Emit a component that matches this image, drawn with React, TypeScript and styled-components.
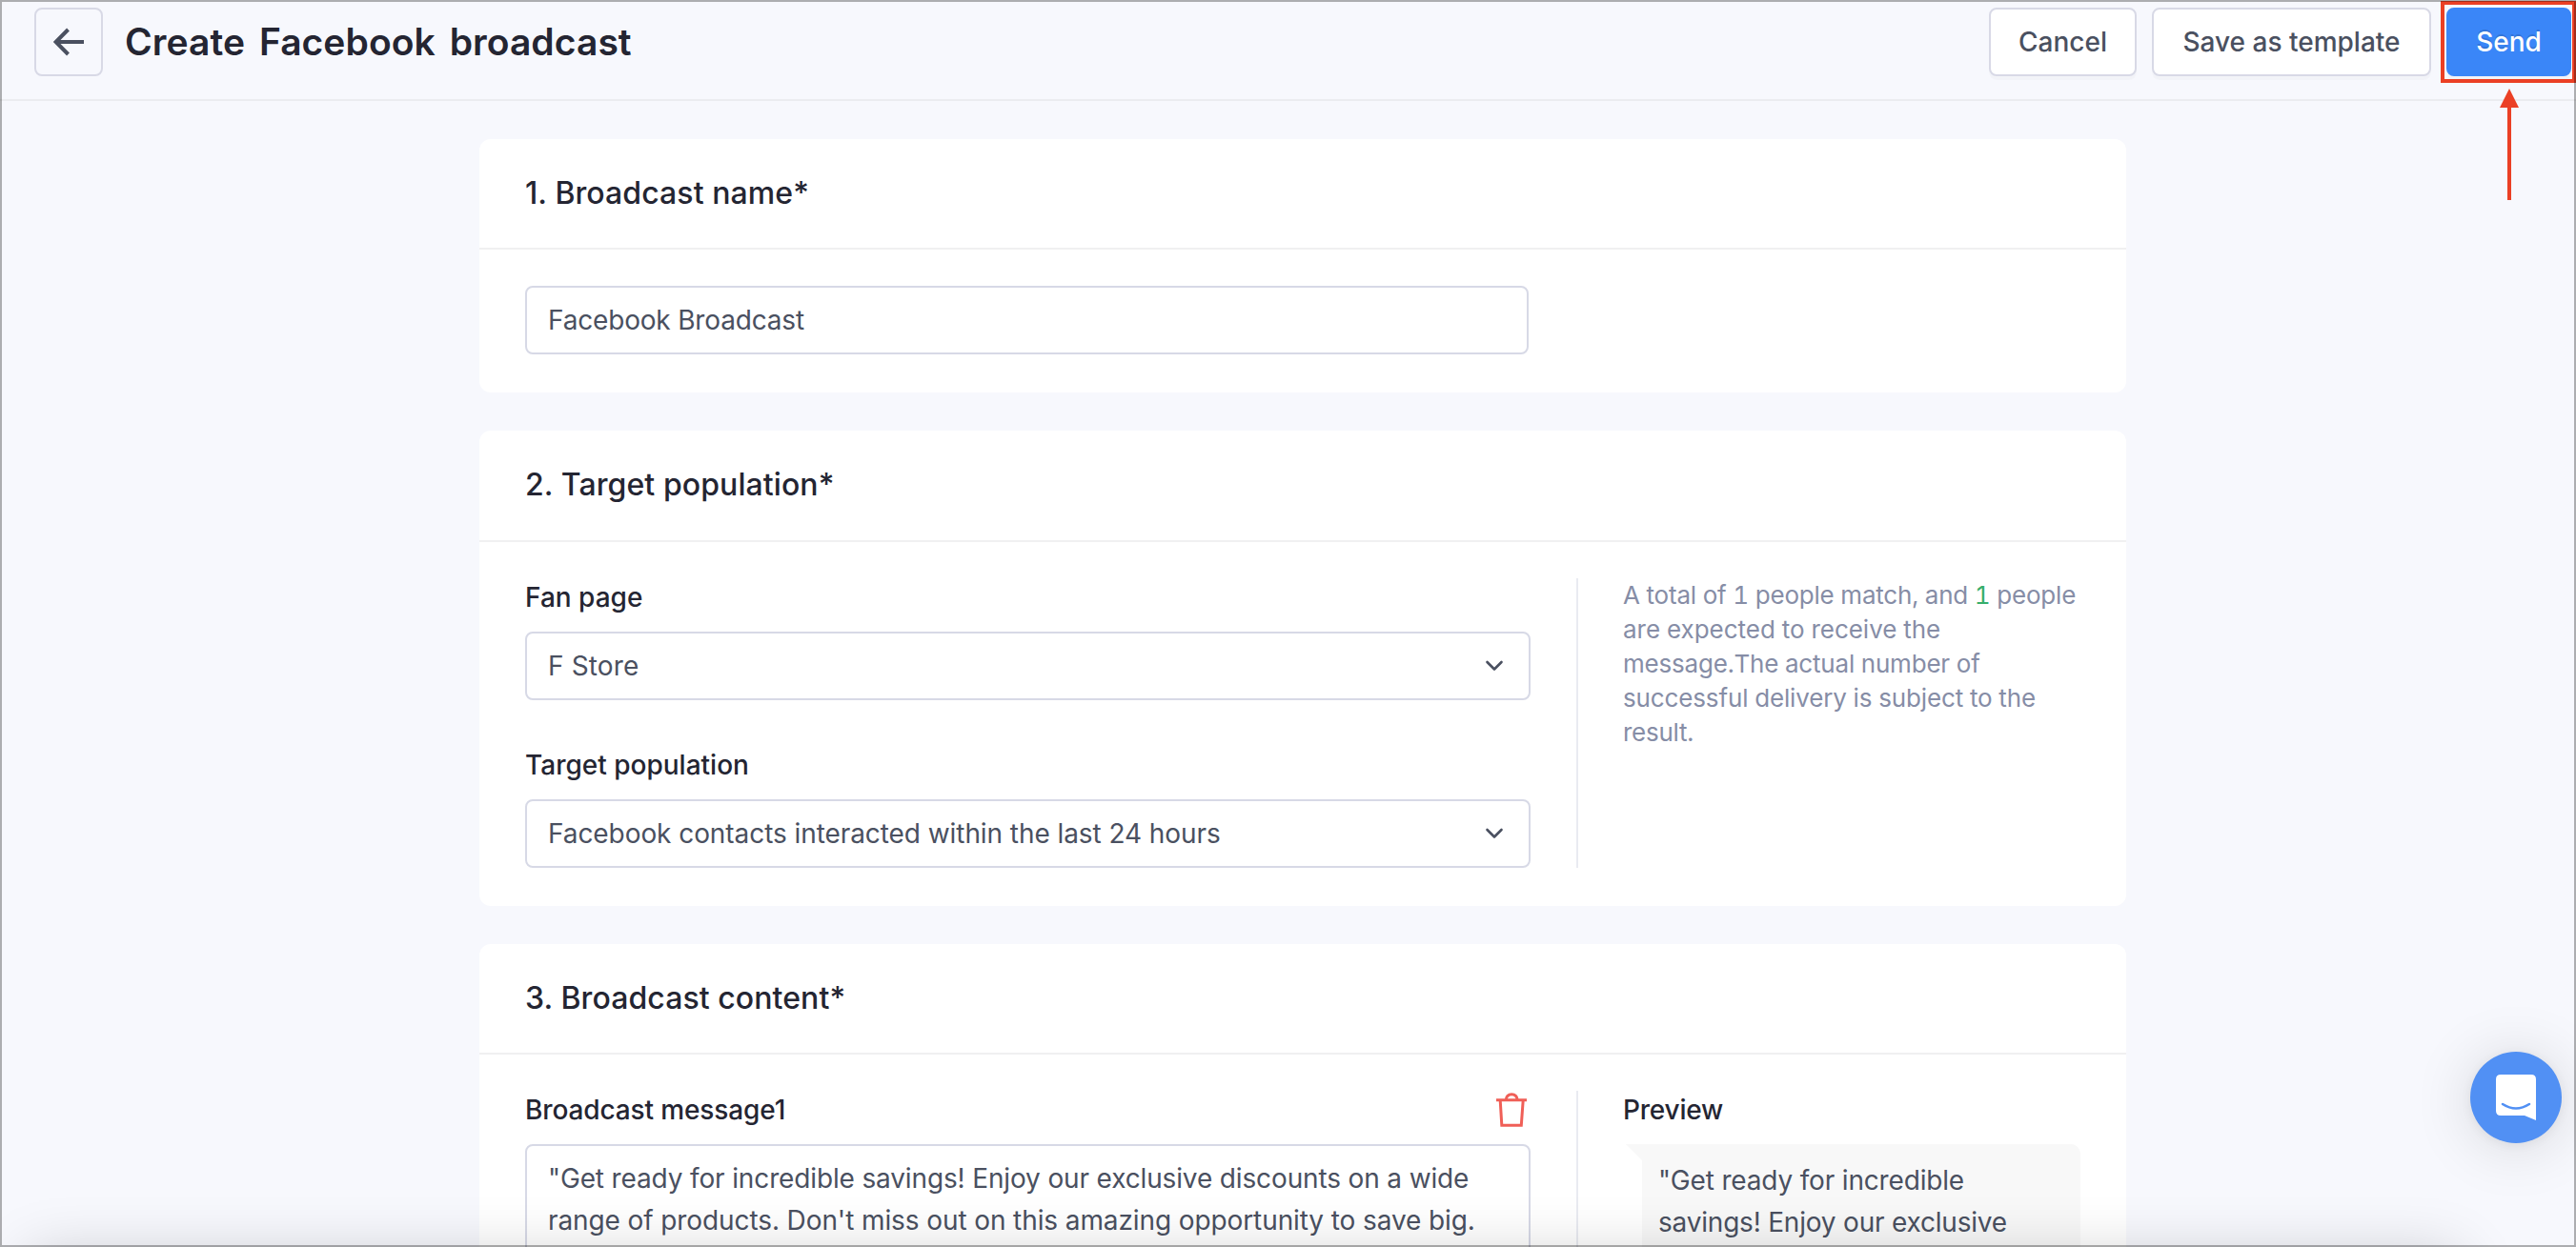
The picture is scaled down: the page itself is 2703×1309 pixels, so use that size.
import React from "react";
import styled, { createGlobalStyle } from "styled-components";

const GlobalStyle = createGlobalStyle`
  * {
    box-sizing: border-box;
  }

  body {
    margin: 0;
    background: #f7f8fd;
    font-family: Inter, "Noto Sans", sans-serif;
    color: #4a5060;
    overflow: hidden;
  }

  h1, h2, p {
    margin: 0;
  }
`;

const Page = styled.div`
  position: relative;
  width: 2703px;
  height: 1309px;
  overflow: hidden;
`;

const Header = styled.header`
  display: flex;
  align-items: flex-start;
  height: 106px;
  padding: 8px 5px 0 36px;
  border-bottom: 2px solid #ebecf0;
`;

const BackButton = styled.button`
  display: flex;
  align-items: center;
  justify-content: center;
  width: 72px;
  height: 72px;
  padding: 0;
  border: 2px solid #d8d9e6;
  border-radius: 8px;
  background: transparent;
`;

const Title = styled.h1`
  flex: 1;
  margin-left: 23px;
  font-size: 39px;
  font-weight: 600;
  line-height: 72px;
  letter-spacing: 0.06px;
  word-spacing: 5px;
  color: #242532;
`;

const Button = styled.button<{ $primary?: boolean; $width: number }>`
  width: ${(props) => props.$width}px;
  height: 72px;
  padding: 0;
  margin-left: 16px;
  border: 2px solid ${(props) => (props.$primary ? "#3a86f8" : "#d8d9e6")};
  border-radius: 8px;
  background: ${(props) => (props.$primary ? "#3a86f8" : "#ffffff")};
  box-shadow: 0 4px 0 rgba(0, 0, 0, 0.02);
  color: ${(props) => (props.$primary ? "#ffffff" : "#4a5060")};
  font-family: inherit;
  font-size: 28px;
  font-weight: 500;
  text-shadow: ${(props) => (props.$primary ? "0 -2px 0 rgba(0, 0, 0, 0.12)" : "none")};
`;

const Main = styled.main`
  display: flex;
  flex-direction: column;
  gap: 40px;
  width: 1728px;
  margin: 40px 0 0 503px;
`;

const Card = styled.section<{ $height: number }>`
  flex: none;
  height: ${(props) => props.$height}px;
  border-radius: 12px;
  background: #ffffff;
`;

const CardTitle = styled.h2<{ $height?: number }>`
  height: ${(props) => props.$height || 116}px;
  padding-left: 48px;
  border-bottom: 2px solid #f0f0f1;
  font-size: 32px;
  font-weight: 500;
  line-height: 114px;
  letter-spacing: 0.08px;
  color: #242532;
`;

const CardBody = styled.div`
  display: flex;
  padding: 38px 48px 40px;
`;

const Fields = styled.div`
  width: 1055px;
`;

const Side = styled.div`
  flex: 1;
  margin-left: 48px;
  padding-left: 47px;
  border-left: 2px solid #e9ebf1;
`;

const Label = styled.div<{ $spacing?: number }>`
  display: flex;
  align-items: center;
  justify-content: space-between;
  height: 40px;
  margin-bottom: 16px;
  font-size: 28px;
  font-weight: 500;
  letter-spacing: ${(props) => props.$spacing || 0}px;
  color: #242532;
`;

const Field = styled.div<{ $width?: number; $spacing?: number }>`
  display: flex;
  align-items: center;
  justify-content: space-between;
  width: ${(props) => props.$width || 1055}px;
  height: 72px;
  padding: 0 26px 0 22px;
  border: 2px solid #d7d9e6;
  border-radius: 8px;
  font-size: 28px;
  letter-spacing: ${(props) => props.$spacing || 0}px;

  & + div {
    margin-top: 48px;
  }
`;

const Hint = styled.p`
  font-size: 26px;
  line-height: 36px;
  color: #868da6;
  font-variant-numeric: tabular-nums;
`;

const Line = styled.span<{ $spacing?: number }>`
  display: block;
  white-space: nowrap;
  letter-spacing: ${(props) => props.$spacing || 0}px;
`;

const Count = styled.span`
  color: #37ae6b;
`;

const TextArea = styled.div`
  height: 240px;
  padding: 12px 22px;
  border: 2px solid #d7d9e6;
  border-radius: 8px;
  font-size: 28px;
  line-height: 44px;
`;

const Bubble = styled.div`
  position: relative;
  width: 460px;
  height: 240px;
  margin-left: 20px;
  padding: 16px 17px;
  border-radius: 0 10px 8px 8px;
  background: #f8f8f8;
  font-size: 28px;
  line-height: 44px;

  &::before {
    content: "";
    position: absolute;
    top: 0;
    left: -17px;
    border-top: 17px solid #f8f8f8;
    border-left: 17px solid transparent;
  }
`;

const Highlight = styled.div`
  position: absolute;
  top: 1px;
  right: 0;
  width: 142px;
  height: 86px;
  border: 4px solid #eb4025;
`;

const Pointer = styled.svg`
  position: absolute;
  top: 93px;
  left: 2623px;
`;

const Messenger = styled.div`
  position: absolute;
  right: 15px;
  bottom: 109px;
  width: 96px;
  height: 96px;
  border-radius: 50%;
  background: #5190f4;
  box-shadow: 0 2px 12px rgba(0, 0, 0, 0.06), 0 4px 64px rgba(0, 0, 0, 0.14);
`;

const BottomShade = styled.div`
  position: absolute;
  left: 30px;
  bottom: -210px;
  width: 2550px;
  height: 200px;
  box-shadow: 0 0 60px rgba(0, 0, 0, 0.2);
`;

const Frame = styled.div`
  position: absolute;
  inset: 0;
  border: 2px solid rgba(0, 0, 0, 0.3);
`;

const Trash = styled.svg`
  margin-right: 3px;
`;

const Chevron = () => (
  <svg width="20" height="12" viewBox="0 0 20 12" fill="none">
    <path d="M2.5 2L10 9.5L17.5 2" stroke="#4a5060" strokeWidth="2.6" strokeLinecap="round" strokeLinejoin="round" />
  </svg>
);

const TrashIcon = () => (
  <Trash width="34" height="38" viewBox="0 0 34 38" fill="none" stroke="#f05f57" strokeWidth="3">
    <path d="M1 8.8H33M5.2 9L6.8 35.2H27.3L29.2 9M11 9C11.5 5 14 2.8 17.2 2.8S22.9 5 23.4 9" />
  </Trash>
);

const App: React.FC = () => {
  return (
    <Page>
      <GlobalStyle />
      <Header>
        <BackButton>
          <svg width="34" height="30" viewBox="0 0 34 30" fill="none" stroke="#4a5060" strokeWidth="4">
            <path d="M33 15H4M16.5 2L3.6 15L16.5 28" />
          </svg>
        </BackButton>
        <Title>Create Facebook broadcast</Title>
        <Button $width={155}>Cancel</Button>
        <Button $width={293}>Save as template</Button>
        <Button $width={131} $primary>
          Send
        </Button>
      </Header>

      <Main>
        <Card $height={266}>
          <CardTitle>1. Broadcast name*</CardTitle>
          <CardBody>
            <Field $width={1053} $spacing={-0.18}>
              Facebook Broadcast
            </Field>
          </CardBody>
        </Card>

        <Card $height={499}>
          <CardTitle $height={117}>2. Target population*</CardTitle>
          <CardBody>
            <Fields>
              <Label>Fan page</Label>
              <Field $spacing={0.15}>
                F Store
                <Chevron />
              </Field>
              <Label>Target population</Label>
              <Field $spacing={-0.07}>
                Facebook contacts interacted within the last 24 hours
                <Chevron />
              </Field>
            </Fields>
            <Side>
              <Hint>
                <Line $spacing={-0.2}>
                  A total of 1 people match, and <Count>1</Count> people
                </Line>
                <Line $spacing={-0.03}>are expected to receive the</Line>
                <Line $spacing={-0.2}>message.The actual number of</Line>
                <Line $spacing={-0.14}>successful delivery is subject to the</Line>
                <Line $spacing={-0.25}>result.</Line>
              </Hint>
            </Side>
          </CardBody>
        </Card>

        <Card $height={499}>
          <CardTitle>3. Broadcast content*</CardTitle>
          <CardBody>
            <Fields>
              <Label $spacing={-0.12}>
                Broadcast message1
                <TrashIcon />
              </Label>
              <TextArea>
                <Line $spacing={-0.14}>"Get ready for incredible savings! Enjoy our exclusive discounts on a wide</Line>
                <Line $spacing={-0.1}>range of products. Don't miss out on this amazing opportunity to save big.</Line>
              </TextArea>
            </Fields>
            <Side>
              <Label $spacing={-0.2}>Preview</Label>
              <Bubble>
                <Line $spacing={-0.17}>"Get ready for incredible</Line>
                <Line $spacing={-0.2}>savings! Enjoy our exclusive</Line>
              </Bubble>
            </Side>
          </CardBody>
        </Card>
      </Main>

      <BottomShade />
      <Messenger>
        <svg width="96" height="96" viewBox="0 0 96 96">
          <path d="M32 24H64Q69 24 69 29V72L57 67H32Q27 67 27 62V29Q27 24 32 24Z" fill="#fff" />
          <path d="M34 55Q48 64 62 55" fill="none" stroke="#5190f4" strokeWidth="2.6" strokeLinecap="round" />
        </svg>
      </Messenger>
      <Highlight />
      <Pointer width="20" height="117" viewBox="0 0 20 117">
        <path d="M10 0L20 20H12V117H8V20H0Z" fill="#eb4025" />
      </Pointer>
      <Frame />
    </Page>
  );
};

export default App;
